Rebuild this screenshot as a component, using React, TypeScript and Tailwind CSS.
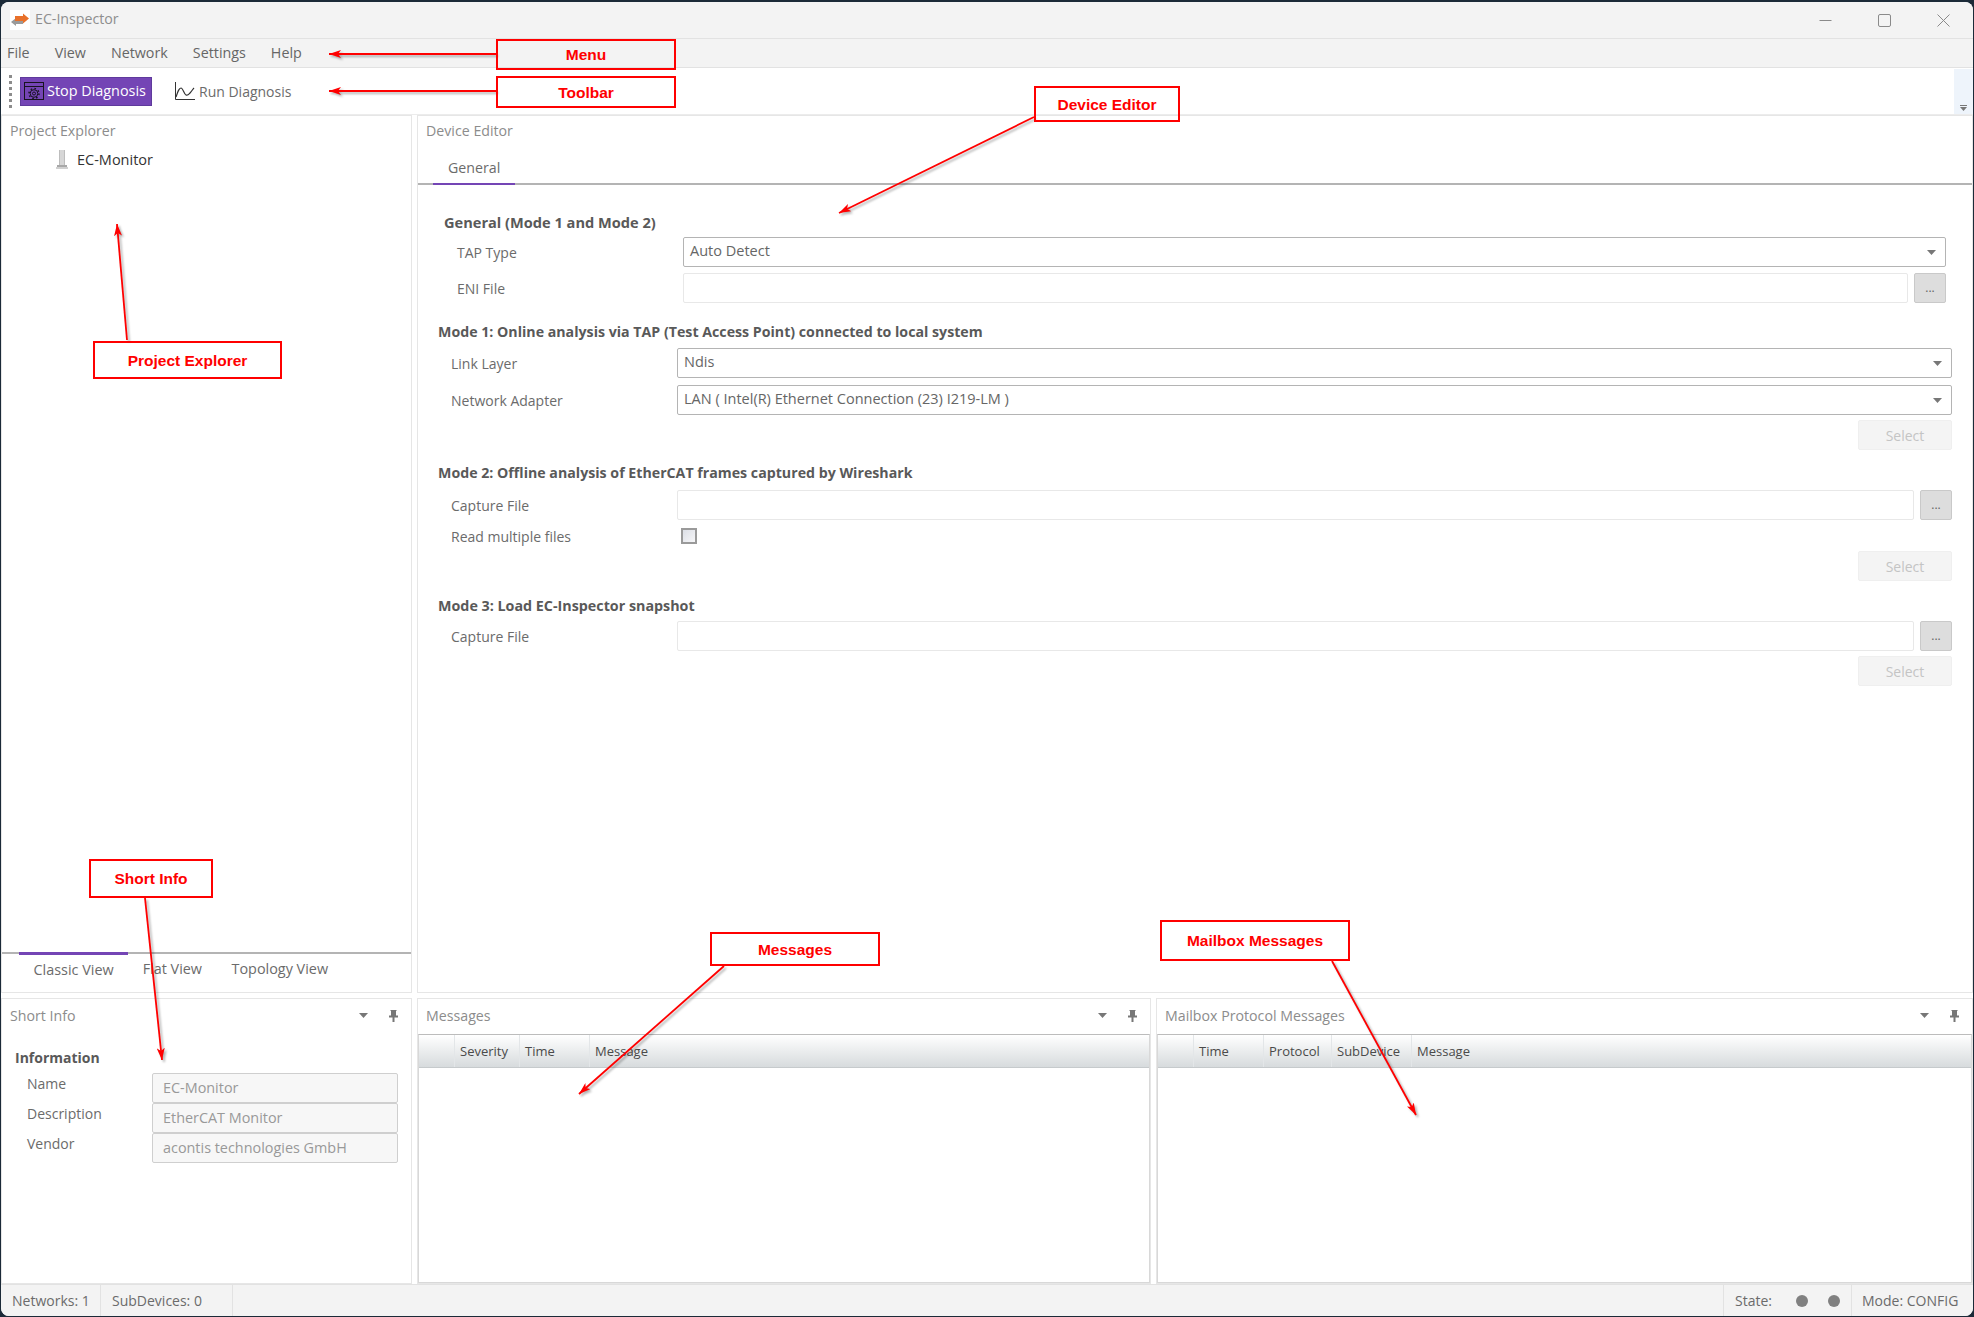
const font = "font-['Open_Sans',sans-serif]";

const annotations = [
  { label: 'Menu', className: 'left-[496px] top-[39px] w-[180px] h-[31px]' },
  { label: 'Toolbar', className: 'left-[496px] top-[76px] w-[180px] h-[32px]' },
  { label: 'Device Editor', className: 'left-[1034px] top-[86px] w-[146px] h-[36px]' },
  { label: 'Project Explorer', className: 'left-[93px] top-[341px] w-[189px] h-[38px]' },
  { label: 'Short Info', className: 'left-[89px] top-[859px] w-[124px] h-[39px]' },
  { label: 'Messages', className: 'left-[710px] top-[932px] w-[170px] h-[34px]' },
  { label: 'Mailbox Messages', className: 'left-[1160px] top-[920px] w-[190px] h-[41px]' },
];

const arrows = [
  [496, 54, 329, 54],
  [496, 91, 329, 91],
  [1034, 117, 839, 213],
  [127, 340, 117, 224],
  [145, 898, 162, 1060],
  [724, 966, 579, 1094],
  [1332, 961, 1416, 1115],
];

function Caret({ className = '' }: { className?: string }) {
  return (
    <svg width="9" height="5" viewBox="0 0 9 5" className={className}>
      <polygon points="0,0 9,0 4.500,5" fill="#777777" />
    </svg>
  );
}

function PanelControls() {
  return (
    <div className="flex items-center gap-[21px]">
      <Caret />
      <svg width="9" height="12" viewBox="0 0 9 12">
        <path d="M1.500 0h6v1H7v4.500h2V7.500H5.500V12h-2V7.500H0V5.500h2V1h-.5z" fill="#777777" />
      </svg>
    </div>
  );
}

function PanelHeader({ title, controls = false }: { title: string; controls?: boolean }) {
  return (
    <div className={`shrink-0 flex items-center justify-between pl-[8px] pr-[13px] text-[14.200px] text-[#8c8c8c] ${controls ? 'h-[35px] pb-[2px]' : 'h-[29px]'}`}>
      <span>{title}</span>
      {controls && <PanelControls />}
    </div>
  );
}

function SelectBox({ value }: { value: string }) {
  return (
    <div className="flex-1 h-[30px] flex items-center justify-between pl-[6px] pr-[9px] pb-[2px] border border-[#b4b4b4] rounded-[2px] text-[14.500px] text-[#666666]">
      <span>{value}</span>
      <Caret className="mt-[2px]" />
    </div>
  );
}

function FileInput() {
  return (
    <div className="flex-1 flex gap-[6px]">
      <div className="flex-1 h-[30px] border border-[#e8e8e8] rounded-[2px]" />
      <div className="w-[32px] h-[30px] flex items-center justify-center border border-[#c9c9c9] bg-[#dddddd] rounded-[2px] text-[12px] text-[#666666]">
        ...
      </div>
    </div>
  );
}

function FieldRow({ label, children, className = '' }: { label: string; children: React.ReactNode; className?: string }) {
  return (
    <div className={`flex items-center ml-[13px] ${className}`}>
      <div className="w-[226px] shrink-0 text-[14px] text-[#6b6b6b]">{label}</div>
      {children}
    </div>
  );
}

function SectionTitle({ children, className = '' }: { children: React.ReactNode; className?: string }) {
  return <div className={`h-[20px] leading-[20px] font-bold text-[#595959] ${className}`}>{children}</div>;
}

function SelectButton({ className = '' }: { className?: string }) {
  return (
    <div className={`self-end w-[94px] h-[30px] flex items-center justify-center border border-[#efefef] bg-[#f4f4f4] rounded-[2px] text-[14px] text-[#c4c4c4] ${className}`}>
      Select
    </div>
  );
}

function DataTable({ columns }: { columns: { label: string; width: string }[] }) {
  return (
    <div className="flex-1 flex flex-col border border-[#d8d8d8] border-t-[#bcbcbc]">
      <div className="h-[33px] flex bg-gradient-to-b from-white to-[#d7dbdd] border-b border-[#c6cacc] text-[13px] text-[#4a4a4a]">
        {columns.map((c, i) => (
          <div key={i} className={`${c.width} flex items-center pl-[5px] pt-[1px] border-r border-[#e3e6e8]`}>
            {c.label}
          </div>
        ))}
      </div>
      <div className="flex-1 bg-white" />
    </div>
  );
}

function InfoRow({ label, value }: { label: string; value: string }) {
  return (
    <div className="flex items-start ml-[25px]">
      <div className="w-[125px] mt-[1px] leading-[20px] text-[14px] text-[#6b6b6b]">{label}</div>
      <div className="w-[246px] h-[30px] flex items-center pl-[10px] border border-[#cfcfcf] bg-[#f7f7f7] rounded-[2px] text-[14.400px] text-[#999999]">
        {value}
      </div>
    </div>
  );
}

export default function App() {
  return (
    <div className={`relative w-[1974px] h-[1317px] overflow-hidden bg-[#1b2a38] pt-[2px] pl-[1px] ${font}`}>
      <div className="w-[1972px] h-[1314px] flex flex-col rounded-[8px] overflow-hidden bg-white">
        {/* title bar */}
        <div className="h-[37px] shrink-0 flex items-center justify-between bg-[#f3f3f3] border-b border-[#e2e2e2] pl-[9px]">
          <div className="flex items-center gap-[5px]">
            <div className="w-[20px] h-[20px] bg-white flex items-center justify-center">
              <svg width="20" height="14" viewBox="0 0 20 14">
                <polygon points="1,9 6,5 6,7 13,7 13,11 6,11 6,13" fill="#9a9a9a" />
                <polygon points="19,5.500 13,0.500 13,3 5,3 5,8 13,8 13,10.500" fill="#e8702a" />
              </svg>
            </div>
            <span className="text-[14.200px] text-[#8e8e8e] pb-[2px]">EC-Inspector</span>
          </div>
          <div className="flex items-center gap-[46px] pr-[23px]">
            <svg width="13" height="13" viewBox="0 0 13 13"><path d="M0.500 6.500h12" stroke="#8a8a8a" /></svg>
            <svg width="13" height="13" viewBox="0 0 13 13"><rect x="0.500" y="0.500" width="12" height="12" rx="1.500" fill="none" stroke="#8a8a8a" /></svg>
            <svg width="13" height="13" viewBox="0 0 13 13"><path d="M0.500 0.500l12 12M12.500 0.500l-12 12" stroke="#8a8a8a" /></svg>
          </div>
        </div>

        {/* menu */}
        <div className="h-[29px] shrink-0 flex items-center gap-[25px] bg-[#f3f3f3] border-b border-[#e2e2e2] pl-[6px] text-[14.300px] text-[#666666]">
          <span>File</span>
          <span>View</span>
          <span>Network</span>
          <span>Settings</span>
          <span>Help</span>
        </div>

        {/* toolbar */}
        <div className="h-[47px] shrink-0 flex items-center bg-white border-b border-[#ececec] pl-[8px]">
          <div className="w-[3px] h-[33px] mr-[8px] border-l-[3px] border-dotted border-[#8c8c8c]" />
          <div className="w-[132px] h-[29px] flex items-center gap-[3px] pl-[3px] bg-[#7445b5] border border-[#5f3a9c] text-[14.400px] text-white">
            <svg width="20" height="18" viewBox="0 0 20 18" fill="none" stroke="#17131f" strokeWidth="1">
              <rect x="0.500" y="0.500" width="19" height="17" />
              <path d="M0.500 4.500h19" />
              <circle cx="10" cy="11.500" r="3.800" />
              <circle cx="10" cy="11.500" r="5" strokeWidth="1.500" strokeDasharray="1.600 2.300" />
              <circle cx="10" cy="11.500" r="1.500" />
            </svg>
            <span>Stop Diagnosis</span>
          </div>
          <div className="flex items-center gap-[4px] ml-[23px] text-[14px] text-[#6b6b6b]">
            <svg width="20" height="18" viewBox="0 0 20 18" fill="none" stroke="#333333">
              <path d="M0.500 0v17.500H20" />
              <path d="M1 15c2-6 3-9 5-9s3 6 5 7 3-1 4-2 3-4 4-5" strokeWidth="1.200" />
            </svg>
            <span>Run Diagnosis</span>
          </div>
          <div className="ml-auto w-[19px] h-[45px] flex flex-col items-center justify-end gap-[1px] pb-[3px] bg-[#eef4fb]">
            <div className="w-[7px] h-[1px] bg-[#777777]" />
            <svg width="7" height="4" viewBox="0 0 7 4"><polygon points="0,0 7,0 3.500,4" fill="#777777" /></svg>
          </div>
        </div>

        {/* docked panels */}
        <div className="flex-1 min-h-0 grid grid-cols-[411px_1fr] grid-rows-[878px_1fr] gap-[5px] bg-white">
          {/* project explorer */}
          <div className="flex flex-col border border-[#e6e6e6]">
            <PanelHeader title="Project Explorer" />
            <div className="flex-1 flex items-start pl-[54px] pt-[4px] text-[14.500px] text-[#333333]">
              <div className="flex items-center gap-[9px]">
                <svg width="12" height="20" viewBox="0 0 12 20">
                  <rect x="3" y="0" width="6" height="15" fill="#bdbdbd" />
                  <path d="M5 0v15M7 0v15" stroke="#f0f0f0" />
                  <rect x="1" y="15" width="10" height="2" fill="#a8a8a8" />
                  <rect x="0" y="17" width="12" height="2" fill="#d0d0d0" />
                </svg>
                <span>EC-Monitor</span>
              </div>
            </div>
            <div className="h-[40px] shrink-0 flex items-start border-t-[2px] border-[#b4b4b4] pl-[17px] text-[14.400px] text-[#6b6b6b]">
              <div className="flex items-center h-[31px] px-[14.500px] -mt-[2px] pt-[2px] border-t-[3px] border-[#7445b5]">
                Classic View
              </div>
              <div className="flex items-center h-[29px] px-[14.500px]">Flat View</div>
              <div className="flex items-center h-[29px] px-[15px]">Topology View</div>
            </div>
          </div>

          {/* device editor */}
          <div className="flex flex-col border border-[#e6e6e6]">
            <PanelHeader title="Device Editor" />
            <div className="h-[40px] shrink-0 flex items-end border-b-[2px] border-[#b4b4b4] pl-[15px]">
              <div className="h-[30px] px-[15px] pb-[3px] flex items-center -mb-[2px] border-b-[2px] border-[#7445b5] text-[14.200px] text-[#6b6b6b]">
                General
              </div>
            </div>

            <div className="flex flex-col pt-[27px] pl-[26px] pr-[26px]">
              <SectionTitle className="text-[14.600px]">General (Mode 1 and Mode 2)</SectionTitle>
              <FieldRow label="TAP Type" className="mt-[5px]">
                <SelectBox value="Auto Detect" />
              </FieldRow>
              <FieldRow label="ENI File" className="mt-[6px]">
                <FileInput />
              </FieldRow>
            </div>

            <div className="flex flex-col pt-[19px] pl-[20px] pr-[20px]">
              <SectionTitle className="text-[14.200px]">Mode 1: Online analysis via TAP (Test Access Point) connected to local system</SectionTitle>
              <FieldRow label="Link Layer" className="mt-[6px]">
                <SelectBox value="Ndis" />
              </FieldRow>
              <FieldRow label="Network Adapter" className="mt-[7px]">
                <SelectBox value="LAN ( Intel(R) Ethernet Connection (23) I219-LM )" />
              </FieldRow>
              <SelectButton className="mt-[5px]" />

              <SectionTitle className="mt-[13px] text-[14.200px]">Mode 2: Offline analysis of EtherCAT frames captured by Wireshark</SectionTitle>
              <FieldRow label="Capture File" className="mt-[7px]">
                <FileInput />
              </FieldRow>
              <FieldRow label="Read multiple files" className="mt-[6px] h-[20px]">
                <div className="ml-[4px] w-[16px] h-[16px] border-2 border-[#9a9a9a] bg-gradient-to-br from-[#dcdfe6] to-[#f6f6f8]" />
              </FieldRow>
              <SelectButton className="mt-[5px]" />

              <SectionTitle className="mt-[15px] text-[14.300px]">Mode 3: Load EC-Inspector snapshot</SectionTitle>
              <FieldRow label="Capture File" className="mt-[5px]">
                <FileInput />
              </FieldRow>
              <SelectButton className="mt-[5px]" />
            </div>
          </div>

          {/* short info */}
          <div className="flex flex-col border border-[#e6e6e6]">
            <PanelHeader title="Short Info" controls />
            <div className="pt-[14px]">
              <div className="h-[20px] leading-[20px] ml-[13px] text-[14px] font-bold text-[#595959]">Information</div>
              <div className="mt-[5px]">
                <InfoRow label="Name" value="EC-Monitor" />
                <InfoRow label="Description" value="EtherCAT Monitor" />
                <InfoRow label="Vendor" value="acontis technologies GmbH" />
              </div>
            </div>
          </div>

          {/* message tables */}
          <div className="flex gap-[5px] min-w-0">
            <div className="w-[734px] flex flex-col border border-[#e6e6e6]">
              <PanelHeader title="Messages" controls />
              <DataTable
                columns={[
                  { label: '', width: 'w-[36px]' },
                  { label: 'Severity', width: 'w-[65px]' },
                  { label: 'Time', width: 'w-[70px]' },
                  { label: 'Message', width: 'flex-1 border-r-0' },
                ]}
              />
            </div>
            <div className="flex-1 flex flex-col border border-[#e6e6e6]">
              <PanelHeader title="Mailbox Protocol Messages" controls />
              <DataTable
                columns={[
                  { label: '', width: 'w-[36px]' },
                  { label: 'Time', width: 'w-[70px]' },
                  { label: 'Protocol', width: 'w-[68px]' },
                  { label: 'SubDevice', width: 'w-[80px]' },
                  { label: 'Message', width: 'flex-1 border-r-0' },
                ]}
              />
            </div>
          </div>
        </div>

        {/* status bar */}
        <div className="h-[32px] shrink-0 flex items-center bg-[#f3f3f3] border-t border-[#e2e2e2] text-[14px] text-[#6b6b6b]">
          <div className="w-[100px] h-full flex items-center pl-[11px] border-r border-[#e2e2e2]">Networks: 1</div>
          <div className="w-[132px] h-full flex items-center pl-[11px] border-r border-[#e2e2e2]">SubDevices: 0</div>
          <div className="ml-auto w-[128px] h-full flex items-center pl-[11px] border-l border-[#e2e2e2]">
            <span>State:</span>
            <div className="ml-[24px] w-[12px] h-[12px] rounded-full bg-[#808080]" />
            <div className="ml-[20px] w-[12px] h-[12px] rounded-full bg-[#808080]" />
          </div>
          <div className="w-[122px] h-full flex items-center pl-[10px] border-l border-[#e2e2e2]">Mode: CONFIG</div>
        </div>
      </div>

      {/* red callouts laid over the screenshot */}
      <svg width="1974" height="1317" className="absolute left-0 top-0 pointer-events-none drop-shadow-[2px_2px_1px_rgba(0,0,0,0.3)]">
        <defs>
          <marker id="head" markerWidth="12" markerHeight="8" refX="12" refY="4" orient="auto" markerUnits="userSpaceOnUse">
            <polygon points="0,4 12,0 9,4 12,8" fill="#ff0000" transform="rotate(180 6 4)" />
          </marker>
        </defs>
        {arrows.map(([x1, y1, x2, y2], i) => (
          <line key={i} x1={x1} y1={y1} x2={x2} y2={y2} stroke="#ff0000" strokeWidth="1.800" markerEnd="url(#head)" />
        ))}
      </svg>
      {annotations.map((a) => (
        <div
          key={a.label}
          className={`absolute flex items-center justify-center pt-[1px] border-2 border-[#ff0000] font-['Liberation_Sans',sans-serif] font-bold text-[15.500px] text-[#ff0000] ${a.className}`}
        >
          {a.label}
        </div>
      ))}
    </div>
  );
}
